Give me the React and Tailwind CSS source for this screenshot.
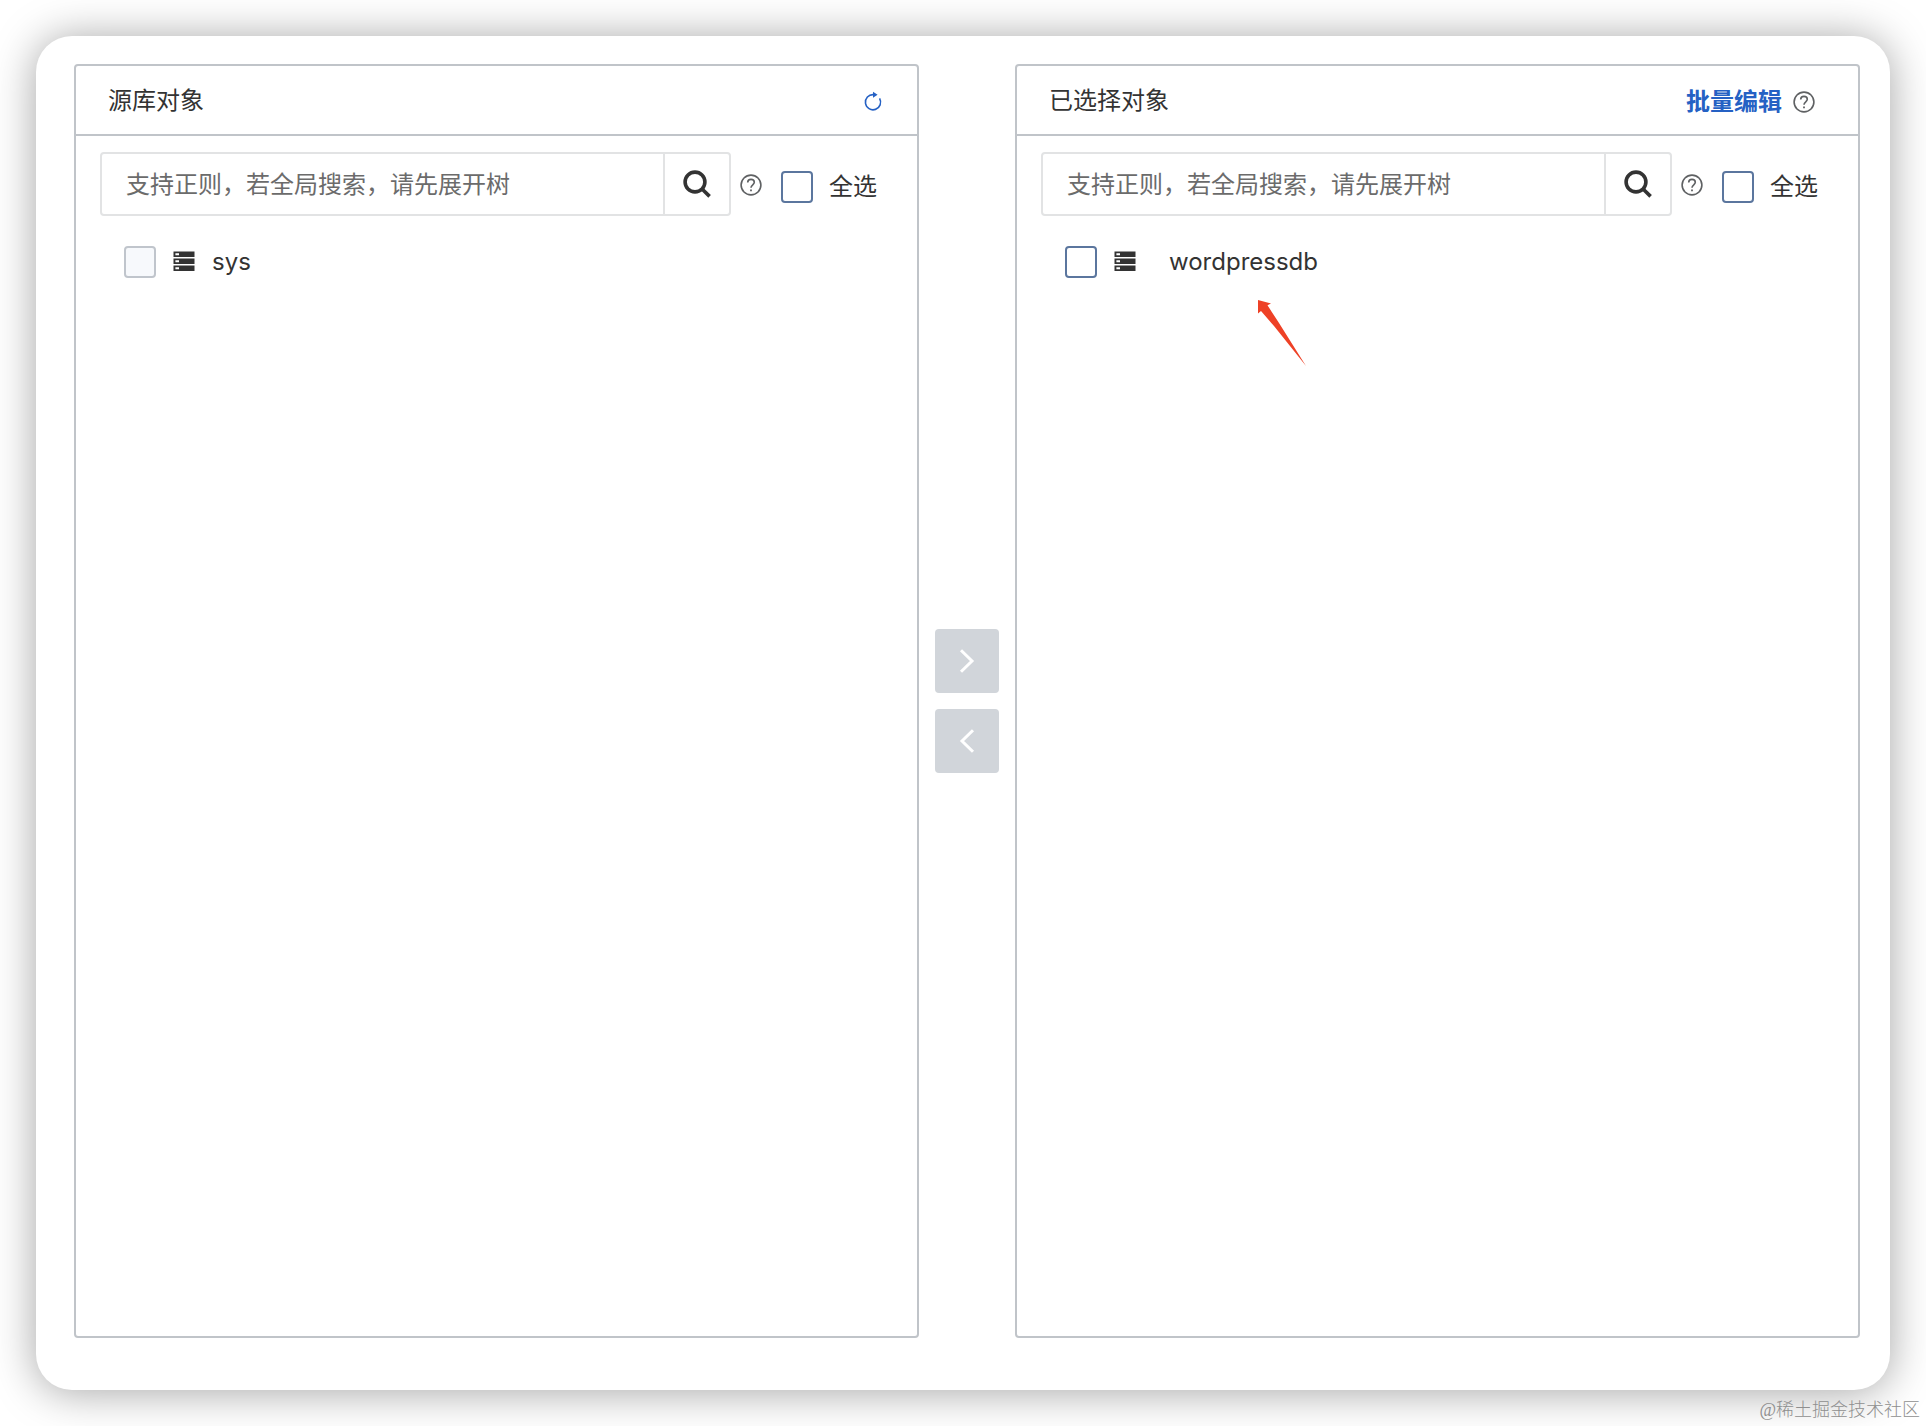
import React, { useId } from "react";

function HelpIcon() {
  return (
    <svg viewBox="0 0 24 24" className="size-6 shrink-0" fill="none" stroke="#5f6163" strokeWidth="1.6">
      <circle cx="12" cy="12" r="9.9" />
      <path d="M8.7 9.6c0-1.9 1.4-3.2 3.3-3.2s3.3 1.2 3.3 2.9c0 2.4-3.3 2.6-3.3 5.4" />
      <path d="M12 16.4v1.8" strokeWidth="1.8" />
    </svg>
  );
}

function RefreshIcon() {
  return (
    <svg viewBox="0 0 24 24" className="size-6" fill="none" stroke="#2561c4" strokeWidth="1.6">
      <path d="M18.6 8.4A7.6 7.6 0 1 1 12.4 4.6" />
      <path d="M12 1.8v6l4.6-3z" fill="#2561c4" stroke="none" />
    </svg>
  );
}

function SearchIcon() {
  return (
    <svg viewBox="0 0 28 28" className="size-7" fill="none" stroke="#333" strokeWidth="3.6">
      <circle cx="12" cy="12" r="9.9" />
      <path d="M18.8 18.8l7.8 7.6" />
    </svg>
  );
}

function DatabaseIcon() {
  return (
    <svg viewBox="0 0 24 24" className="size-6 shrink-0">
      <g fill="#333">
        <path d="M1.5 1.5h21v5.4h-21zM1.5 8.5h21v5.4h-21zM1.5 15.5h21v5.4h-21z" />
      </g>
      <g fill="#fff">
        <path d="M3.4 3.2H7v2H3.4zM3.4 10.2H7v2H3.4zM3.4 17.2H7v2H3.4z" />
      </g>
    </svg>
  );
}

function Checkbox(props) {
  return (
    <input
      type="checkbox"
      className="size-8 shrink-0 appearance-none rounded border-2 border-[#5b769e] bg-white checked:bg-[#5b769e] disabled:border-[#c0c5cc] disabled:bg-[#f7f9fc]"
      {...props}
    />
  );
}

function Panel({ title, actions, children }) {
  const selectAllId = useId();
  return (
    <section className="flex min-w-0 flex-1 flex-col rounded border-2 border-[#c0c4c9]">
      <header className="flex h-[70px] items-center justify-between border-b-2 border-[#c0c4c9] px-8 pt-0.5">
        <h2>{title}</h2>
        <div className="flex items-center pt-0.5">{actions}</div>
      </header>
      <div className="flex items-center pt-4 pr-10 pl-6">
        <form className="flex h-16 min-w-0 flex-1 rounded border-2 border-[#e2e3e4]" onSubmit={(e) => e.preventDefault()}>
          <input
            type="text"
            aria-label={title + "搜索"}
            placeholder="支持正则，若全局搜索，请先展开树"
            className="min-w-0 flex-1 px-6 pt-0.5 outline-none placeholder:text-[#6b6b6b]"
          />
          <button type="submit" aria-label="搜索" className="flex w-[66px] items-center justify-center border-l-2 border-[#e2e3e4]">
            <SearchIcon />
          </button>
        </form>
        <div className="flex items-center pt-0.5 pl-2">
          <HelpIcon />
          <div className="ml-[18px] flex items-center gap-4 pt-1">
            <Checkbox id={selectAllId} />
            <label htmlFor={selectAllId}>全选</label>
          </div>
        </div>
      </div>
      <ul className="px-12 pt-[30px]">{children}</ul>
    </section>
  );
}

function MoveButton({ label, path }) {
  return (
    <button type="button" aria-label={label} className="flex size-16 items-center justify-center rounded bg-[#d1d5da]">
      <svg viewBox="0 0 24 24" className="size-6" fill="none" stroke="#fff" strokeWidth="3">
        <path d={path} />
      </svg>
    </button>
  );
}

export default function App() {
  return (
    <div
      lang="zh-CN"
      className="relative flex min-h-screen flex-col bg-white p-9 font-[Inter,'Noto_Sans_CJK_SC',sans-serif] text-[24px] leading-8 text-[#333]"
    >
      <main className="flex flex-1 gap-4 rounded-[36px] bg-white pt-7 pr-[30px] pb-[52px] pl-[38px] shadow-[0_2px_44px_rgba(0,0,0,0.36)]">
        <Panel
          title="源库对象"
          actions={
            <button type="button" aria-label="刷新">
              <RefreshIcon />
            </button>
          }
        >
          <li className="flex h-8 items-center gap-4">
            <Checkbox id="db-sys" disabled />
            <DatabaseIcon />
            <label htmlFor="db-sys">sys</label>
          </li>
        </Panel>

        <div className="flex flex-col justify-center gap-4">
          <MoveButton label="添加" path="M6 1.2L17 12 6 22.8" />
          <MoveButton label="移除" path="M18 1.2L7 12l11 10.8" />
        </div>

        <Panel
          title="已选择对象"
          actions={
            <div className="flex items-center gap-2.5 pr-2.5">
              <a href="#batch-edit" className="font-bold text-[#2561c4]">
                批量编辑
              </a>
              <HelpIcon />
            </div>
          }
        >
          <li className="relative flex h-8 items-center gap-4">
            <Checkbox id="db-wordpress" />
            <DatabaseIcon />
            <label htmlFor="db-wordpress" className="pl-4">
              wordpressdb
            </label>
            <svg viewBox="0 0 48 66" className="absolute top-[54px] left-[193px] h-[66px] w-12" fill="#ee4126">
              <path d="M0 0l13 3.5-3.5 1.8L21 23l27 43-32-40L3 11 0 13.5z" />
            </svg>
          </li>
        </Panel>
      </main>
      <p className="absolute right-1.5 bottom-1 font-['Liberation_Serif','Noto_Sans_CJK_SC',serif] text-[18px] leading-6 font-light text-[#8f8f8f]">
        @稀土掘金技术社区
      </p>
    </div>
  );
}
